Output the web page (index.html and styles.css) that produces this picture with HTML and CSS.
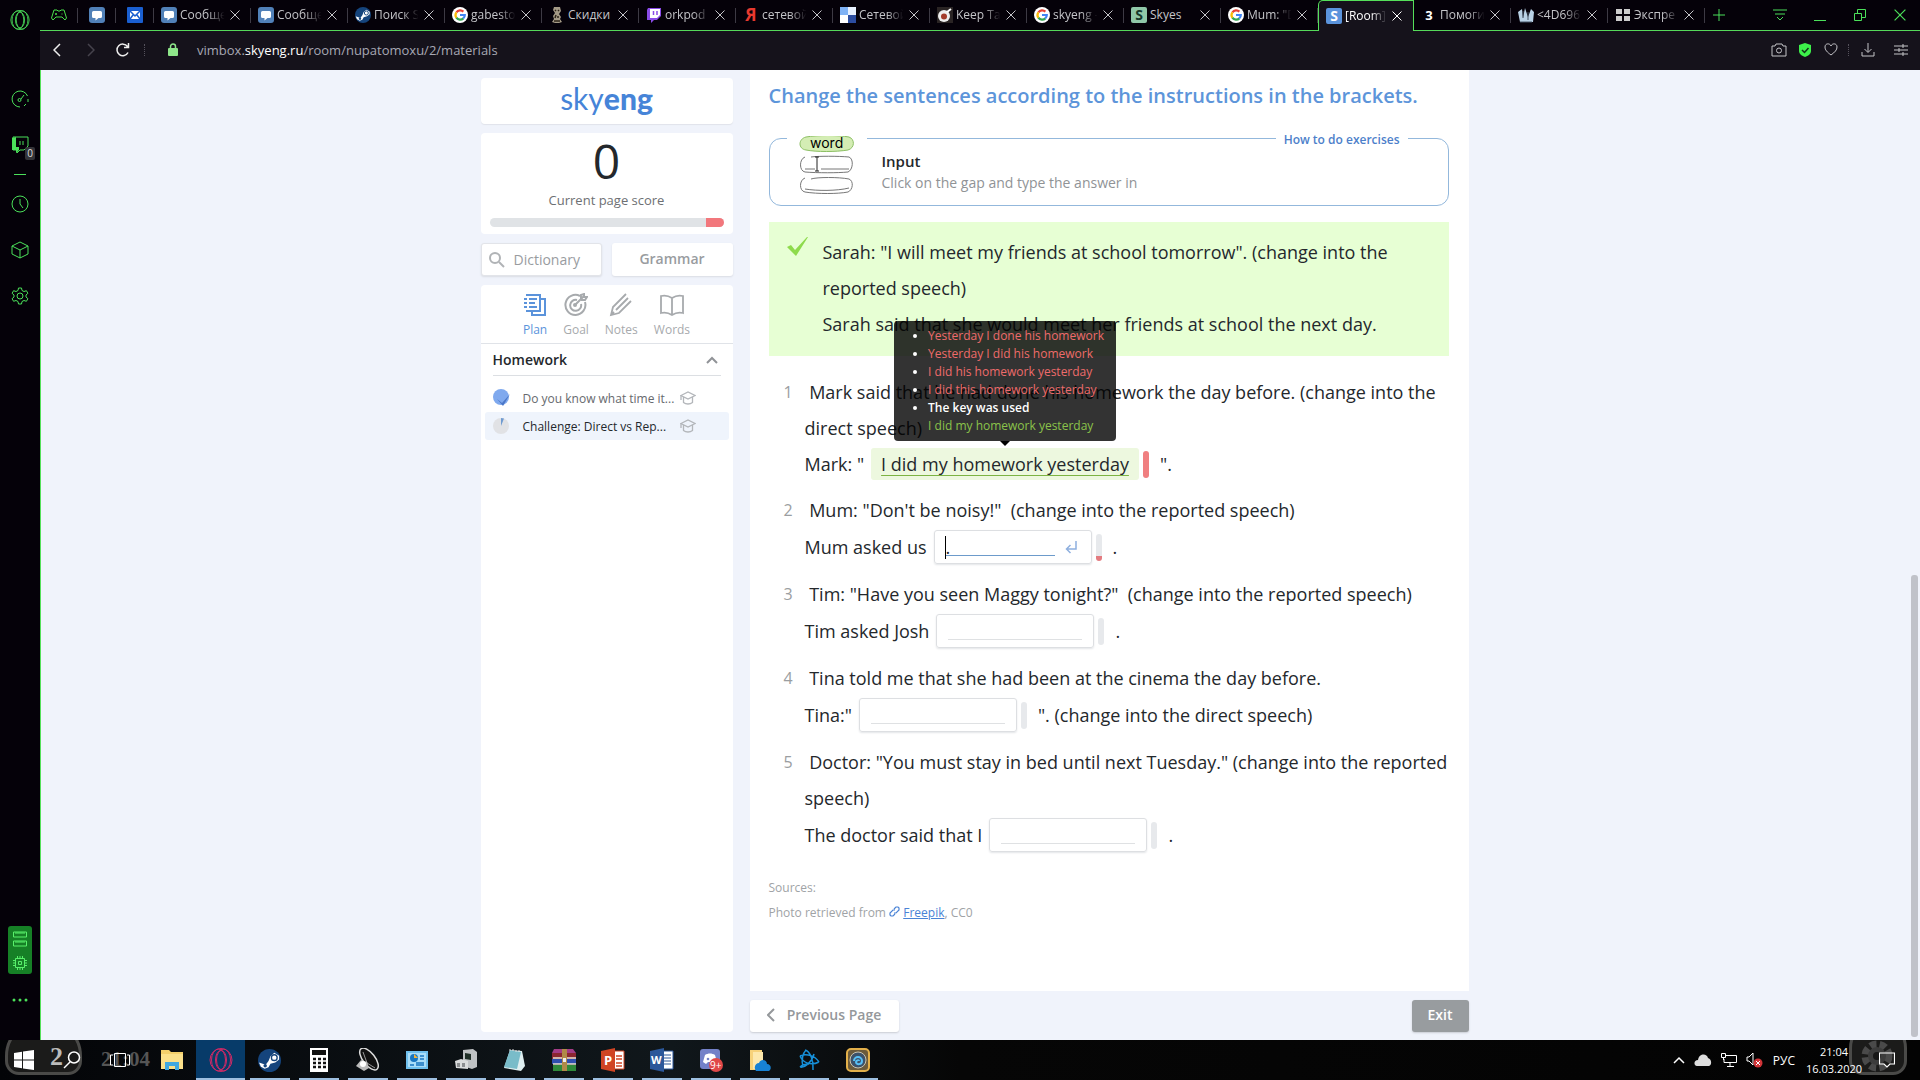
FILE: index.html
```
<!DOCTYPE html>
<html lang="en">
<head>
<meta charset="utf-8">
<title>[Room] Skyeng</title>
<link rel="stylesheet" href="styles.css">
</head>
<body>
<svg class="defs" aria-hidden="true">
  <symbol id="x" viewBox="0 0 10 10"><path d="M0.5 0.5l9 9M9.5 0.5l-9 9" stroke="currentColor" fill="none"/></symbol>
  <symbol id="google" viewBox="0 0 16 16"><circle cx="8" cy="8" r="8" fill="#fff"/><g fill="none" stroke-width="2.2"><path d="M4.4 5.3A4.7 4.7 0 0 1 11.4 4.6" stroke="#ea4335"/><path d="M4.4 10.8A4.8 4.8 0 0 1 4.4 5.3" stroke="#fbbc05"/><path d="M11.4 11.4A4.8 4.8 0 0 1 4.4 10.8" stroke="#34a853"/><path d="M8 8h4.8A4.8 4.8 0 0 1 11.2 11.5" stroke="#4285f4"/></g></symbol>
  <symbol id="vk" viewBox="0 0 16 16"><rect width="16" height="16" rx="3" fill="#5181b8"/><path d="M4.500 4h7A1.500 1.500 0 0 1 13 5.500v4A1.500 1.500 0 0 1 11.500 11H9.500l-3 2.500V11h-2A1.500 1.500 0 0 1 3 9.500v-4A1.500 1.500 0 0 1 4.500 4z" fill="#fff"/></symbol>
  <symbol id="steam" viewBox="0 0 24 24"><circle cx="12" cy="12" r="12" fill="#15447c"/><path d="M1 14l7 2.500 3-4 2-5L17 4l5 3v4l-4 3-5 1.500L11 19l-4 1.500-4-2z" fill="#fff"/><circle cx="17" cy="9" r="3" fill="#fff" stroke="#15447c" stroke-width="1.400"/><circle cx="7.500" cy="17.500" r="1.800" fill="#15447c"/></symbol>
  <symbol id="opera" viewBox="0 0 24 24"><g fill="none" stroke="currentColor"><ellipse cx="12" cy="12" rx="11" ry="11.500"/><ellipse cx="12" cy="12" rx="5.500" ry="9.500"/><ellipse cx="9.500" cy="12" rx="7" ry="11"/><ellipse cx="14.500" cy="12" rx="7" ry="11"/></g></symbol>
  <symbol id="cap" viewBox="0 0 16 14"><g fill="none" stroke="#b3b6ba" stroke-width="1.300"><path d="M1 4.500L8 1l7 3.500L8 8z"/><path d="M3.500 6v5.500C6 13.500 10 13.500 12.500 11.500V6M1 4.500V9"/></g></symbol>
  <symbol id="enter" viewBox="0 0 12 14"><path d="M11 1v8H2M5.500 5L1.500 9l4 4" fill="none" stroke="#8fb0df" stroke-width="1.500"/></symbol>
</svg>

<div class="browser">
  <aside class="opera-bar">
    <button class="ico" aria-label="Opera"><svg width="20" height="22"><use href="#opera"/></svg></button>
    <nav class="opera-nav">
      <a href="#" class="ico" aria-label="GX Control"><svg width="18" height="18" viewBox="0 0 18 18"><path d="M9 17A8 8 0 1 1 16.500 6M17 9v3M13 16l2-2" fill="none" stroke="currentColor"/><path d="M7 10a1.500 1.500 0 1 0 3 0 1.500 1.500 0 1 0-3 0M10 9l3-4" fill="none" stroke="currentColor"/></svg></a>
      <a href="#" class="ico twitch" aria-label="Twitch"><svg width="18" height="18" viewBox="0 0 18 18"><path d="M2 1h15v9l-4 4H9l-3 3v-3H2z" fill="none" stroke="currentColor"/><path d="M1 2l4-1v10h3v3l-3 3v-3H1z" fill="currentColor"/><path d="M9 5v4M12 5v4" stroke="currentColor"/></svg><span class="badge">0</span></a>
      <span class="dash"></span>
      <a href="#" class="ico" aria-label="History"><svg width="18" height="18" viewBox="0 0 18 18"><circle cx="9" cy="9" r="8" fill="none" stroke="currentColor"/><path d="M9 4v5l3 4" fill="none" stroke="currentColor"/></svg></a>
      <a href="#" class="ico" aria-label="Extensions"><svg width="18" height="18" viewBox="0 0 18 18"><path d="M9 1l8 4v8l-8 4-8-4V5zM1 5l8 4 8-4M9 9v8" fill="none" stroke="currentColor"/></svg></a>
      <a href="#" class="ico" aria-label="Settings"><svg width="18" height="18" viewBox="0 0 18 18"><path d="M7.500 1h3l.5 2.500 2 1 2.400-.8 1.500 2.600L15 8v2l1.900 1.700-1.500 2.600-2.400-.8-2 1-.5 2.500h-3L7 14.500l-2-1-2.400.8-1.500-2.600L3 10V8L1.100 6.300l1.500-2.600 2.400.8 2-1z" fill="none" stroke="currentColor"/><circle cx="9" cy="9" r="3" fill="none" stroke="currentColor"/></svg></a>
    </nav>
    <div class="gx">
      <svg width="14" height="18" viewBox="0 0 14 18"><path d="M.5 2h13v5H.5zM.5 11h13v5H.5zM3 2v2M5 2v2M7 2v2M9 2v2M11 2v2M3 11v2M5 11v2M7 11v2M9 11v2M11 11v2" fill="none" stroke="currentColor"/></svg>
      <svg width="16" height="16" viewBox="0 0 16 16"><path d="M3.500 3.500h9v9h-9zM6.500 6.500h3v3h-3zM5.500 1v2M8 1v2M10.500 1v2M5.500 13v2M8 13v2M10.500 13v2M1 5.500h2M1 8h2M1 10.500h2M13 5.500h2M13 8h2M13 10.500h2" fill="none" stroke="currentColor"/></svg>
    </div>
    <button class="ico more" aria-label="More"><svg width="16" height="4" viewBox="0 0 16 4"><circle cx="2" cy="2" r="1.500"/><circle cx="8" cy="2" r="1.500"/><circle cx="14" cy="2" r="1.500"/></svg></button>
  </aside>

  <div class="window">
    <header class="tabs">
      <div class="tab pin"><svg width="16" height="12" viewBox="0 0 16 12"><path d="M3 1h3l1 1h2l1-1h3l2.500 8-1.500 2-3-3H5l-3 3L.5 9zM5 4v2M4 5h2M10.500 5h1" fill="none" stroke="#4be04b"/></svg></div>
      <div class="tab pin"><svg width="16" height="16"><use href="#vk"/></svg></div>
      <div class="tab pin"><svg width="16" height="16" viewBox="0 0 16 16"><rect width="16" height="16" rx="1" fill="#1a5fd0"/><path d="M3 4h10v8H3z" fill="#fff"/><path d="M3 4l5 5 5-5M3 12l3-4M13 12l-3-4" fill="none" stroke="#1a5fd0" stroke-width="1.500"/></svg></div>
      <div class="tab"><svg width="16" height="16"><use href="#vk"/></svg><span>Сообще</span><button aria-label="Close"><svg width="10" height="10"><use href="#x"/></svg></button></div>
      <div class="tab"><svg width="16" height="16"><use href="#vk"/></svg><span>Сообще</span><button aria-label="Close"><svg width="10" height="10"><use href="#x"/></svg></button></div>
      <div class="tab"><svg width="16" height="16"><use href="#steam"/></svg><span>Поиск S</span><button aria-label="Close"><svg width="10" height="10"><use href="#x"/></svg></button></div>
      <div class="tab"><svg width="16" height="16"><use href="#google"/></svg><span>gabesto</span><button aria-label="Close"><svg width="10" height="10"><use href="#x"/></svg></button></div>
      <div class="tab"><svg width="16" height="16" viewBox="0 0 16 16"><path d="M5 0h6l1 4-2 3 2 3-1 2 2 3-3 1H6l-3-1 2-3-1-3 2-3-2-3z" fill="#a49a86"/><path d="M6 3l1 1M10 3l-1 1M7 8l-1 3M10 10H8M5 14h6" stroke="#2c2418" stroke-width="1.500"/></svg><span class="full">Скидки</span><button aria-label="Close"><svg width="10" height="10"><use href="#x"/></svg></button></div>
      <div class="tab"><svg width="16" height="16" viewBox="0 0 16 16"><path d="M2 1h13v8l-4 4H8l-3 3v-3H1V3z" fill="#8a4be8"/><path d="M4 2h10v6l-3 3H4z" fill="#fff"/><path d="M7.500 4v4M11 4v4" stroke="#8a4be8" stroke-width="1.500"/></svg><span>orkpod</span><button aria-label="Close"><svg width="10" height="10"><use href="#x"/></svg></button></div>
      <div class="tab"><b class="fav ya">Я</b><span>сетевой</span><button aria-label="Close"><svg width="10" height="10"><use href="#x"/></svg></button></div>
      <div class="tab"><svg width="16" height="16" viewBox="0 0 16 16"><path d="M0 0h8v8H0z" fill="#7fb2f5"/><path d="M8 0h8v8H8z" fill="#e8f1ff"/><path d="M0 8h8v8H0z" fill="#fff"/><path d="M8 8h8v8H8z" fill="#2c4da0"/></svg><span>Сетевой</span><button aria-label="Close"><svg width="10" height="10"><use href="#x"/></svg></button></div>
      <div class="tab"><svg width="16" height="16" viewBox="0 0 16 16"><path d="M0 0h16v16H0z" fill="#2a2424"/><circle cx="7" cy="9" r="6" fill="#eee"/><circle cx="7" cy="9.500" r="3" fill="#a33b2b"/><path d="M10 5l4-3" stroke="#fff" stroke-width="2"/></svg><span>Keep Tal</span><button aria-label="Close"><svg width="10" height="10"><use href="#x"/></svg></button></div>
      <div class="tab"><svg width="16" height="16"><use href="#google"/></svg><span>skyeng -</span><button aria-label="Close"><svg width="10" height="10"><use href="#x"/></svg></button></div>
      <div class="tab"><b class="fav sk">S</b><span class="full">Skyes</span><button aria-label="Close"><svg width="10" height="10"><use href="#x"/></svg></button></div>
      <div class="tab"><svg width="16" height="16"><use href="#google"/></svg><span>Mum: "D</span><button aria-label="Close"><svg width="10" height="10"><use href="#x"/></svg></button></div>
      <div class="tab active"><b class="fav room">S</b><span>[Room]</span><button aria-label="Close"><svg width="10" height="10"><use href="#x"/></svg></button></div>
      <div class="tab"><b class="fav three">3</b><span>Помоги</span><button aria-label="Close"><svg width="10" height="10"><use href="#x"/></svg></button></div>
      <div class="tab"><svg width="16" height="16" viewBox="0 0 16 16"><path d="M0 5l4-3 1 9 2-10 3 9 3-8 3 3-1 10H2z" fill="#b9d2e6"/><path d="M5 11V4M10 13V5M2 15h12" stroke="#456"/></svg><span>&lt;4D696</span><button aria-label="Close"><svg width="10" height="10"><use href="#x"/></svg></button></div>
      <div class="tab"><svg width="16" height="16" viewBox="0 0 16 16" fill="#ccc"><rect x="1" y="2" width="6" height="5"/><rect x="9" y="2" width="6" height="5"/><rect x="1" y="9" width="6" height="5"/><rect x="9" y="9" width="6" height="5"/></svg><span>Экспре</span><button aria-label="Close"><svg width="10" height="10"><use href="#x"/></svg></button></div>
      <button class="newtab" aria-label="New tab"><svg width="12" height="12" viewBox="0 0 12 12"><path d="M6 0v12M0 6h12" stroke="currentColor"/></svg></button>
      <div class="winctl">
        <button aria-label="Tab menu"><svg width="14" height="14" viewBox="0 0 14 14"><path d="M0 2h14M2 6h10M4 9l3 3 3-3" fill="none" stroke="currentColor"/></svg></button>
        <button aria-label="Minimize"><svg width="14" height="14" viewBox="0 0 14 14"><path d="M1 12.500h12" stroke="currentColor"/></svg></button>
        <button aria-label="Restore"><svg width="14" height="14" viewBox="0 0 14 14"><path d="M1.500 5.500h7v7h-7zM4.500 5V1.500h8v8H9" fill="none" stroke="currentColor"/></svg></button>
        <button aria-label="Close window"><svg width="12" height="12"><use href="#x"/></svg></button>
      </div>
    </header>

    <div class="address">
      <button class="w" aria-label="Back"><svg width="8" height="14" viewBox="0 0 8 14"><path d="M7 1L1 7l6 6" fill="none" stroke="currentColor" stroke-width="1.500"/></svg></button>
      <button class="dim" aria-label="Forward"><svg width="8" height="14" viewBox="0 0 8 14"><path d="M1 1l6 6-6 6" fill="none" stroke="currentColor" stroke-width="1.500"/></svg></button>
      <button class="w" aria-label="Reload"><svg width="14" height="14" viewBox="0 0 14 14"><path d="M12 9.500A5.800 5.800 0 1 1 11.500 3.500M12.500 0v4.500H8" fill="none" stroke="currentColor" stroke-width="1.500"/></svg></button>
      <i class="vdots"></i>
      <svg class="lock" width="12" height="14" viewBox="0 0 12 14"><path d="M3.500 7V3.500a2.500 2.500 0 0 1 5 0V7" fill="none" stroke="#8ee68a" stroke-width="1.500"/><rect x="1" y="5" width="10" height="8" rx="1" fill="#8ee68a"/></svg>
      <p class="url">vimbox.<em>skyeng.ru</em>/room/nupatomoxu/2/materials</p>
      <div class="addr-tools">
        <button aria-label="Snapshot"><svg width="16" height="14" viewBox="0 0 16 14"><path d="M1 3h3l1-2h6l1 2h3v10H1z" fill="none" stroke="currentColor"/><circle cx="8" cy="7.500" r="2.500" fill="none" stroke="currentColor"/></svg></button>
        <button aria-label="Protection"><svg width="12" height="14" viewBox="0 0 12 14"><path d="M6 0l6 2v6c0 3-3 5-6 6-3-1-6-3-6-6V2z" fill="#3df04a"/><path d="M3 7l2.500 2.500L9.500 5" fill="none" stroke="#12301a" stroke-width="1.500"/></svg></button>
        <button aria-label="Bookmark"><svg width="14" height="13" viewBox="0 0 14 13"><path d="M7 12C3 9 1 7 1 4c0-4 5-4 6-1 1-3 6-3 6 1 0 3-2 5-6 8z" fill="none" stroke="currentColor"/></svg></button>
        <i class="vdots"></i>
        <button aria-label="Downloads"><svg width="14" height="14" viewBox="0 0 14 14"><path d="M7 0v9M3.500 6L7 9.500 10.500 6M1 9v4h12V9" fill="none" stroke="currentColor"/></svg></button>
        <button class="tune" aria-label="Easy setup"><svg width="14" height="12" viewBox="0 0 14 12"><path d="M0 2h14M0 6h14M0 10h14M9 0v4M5 4v4M9 8v4" stroke="currentColor"/></svg></button>
      </div>
    </div>

    <div class="page">
      <div class="columns">
        <aside class="side">
          <div class="card brand"><a href="#">sky<b>eng</b></a></div>
          <div class="card score"><strong>0</strong><p>Current page score</p><div class="bar"><i></i></div></div>
          <div class="pair">
            <label class="dict"><svg width="18" height="18" viewBox="0 0 18 18"><circle cx="7" cy="7" r="5" fill="none" stroke="#b0b3b6" stroke-width="2"/><path d="M11 11l5 5" stroke="#b0b3b6" stroke-width="2"/></svg><input type="text" placeholder="Dictionary" aria-label="Dictionary"></label>
            <button class="grammar">Grammar</button>
          </div>
          <div class="card plan">
            <nav class="kinds">
              <a href="#" class="on"><svg width="22" height="24" viewBox="0 0 22 24"><g fill="none" stroke="currentColor" stroke-width="2"><path d="M3 3V2h13v16H3v-1M17 6h4v16H8v-3"/><path d="M0 6h3M5 6h8M0 10h3M5 10h6M0 14h3M5 14h8"/></g></svg>Plan</a>
              <a href="#"><svg width="24" height="24" viewBox="0 0 24 24"><g fill="none" stroke="currentColor" stroke-width="2"><path d="M16 3A10 10 0 1 0 21 9"/><path d="M13 7a5.500 5.500 0 1 0 4 4M11 12l9-9M17 6V2l3-1v3h3l-2 3h-4"/></g><circle cx="11" cy="12" r="2" fill="currentColor"/></svg>Goal</a>
              <a href="#"><svg width="24" height="24" viewBox="0 0 24 24"><path d="M17 1L4 14 2 22l8-2L22 8M19 5L7 17M2 22l3-3" fill="none" stroke="currentColor" stroke-width="1.800"/></svg>Notes</a>
              <a href="#"><svg width="24" height="24" viewBox="0 0 24 24"><path d="M1 3c4-1 8 0 11 2 3-2 7-3 11-2v17c-4-1-8 0-11 2-3-2-7-3-11-2zM12 5v17" fill="none" stroke="currentColor" stroke-width="1.800"/></svg>Words</a>
            </nav>
            <h2>Homework<svg width="12" height="8" viewBox="0 0 12 8"><path d="M1 7l5-5 5 5" fill="none" stroke="#909397" stroke-width="2"/></svg></h2>
            <a href="#" class="lesson"><svg width="18" height="18" viewBox="0 0 18 18"><circle cx="8" cy="8" r="8" fill="#7fa9ee"/><path d="M4 10l5 4 8-9-7 12z" fill="#4b77c8"/></svg><span>Do you know what time it...</span><svg width="16" height="14"><use href="#cap"/></svg></a>
            <a href="#" class="lesson cur"><svg width="18" height="18" viewBox="0 0 18 18"><circle cx="8" cy="9" r="8" fill="#e1e2e5"/><path d="M8 9V1a8 8 0 0 1 3 .6z" fill="#6f9bd1"/></svg><span>Challenge: Direct vs Rep...</span><svg width="16" height="14"><use href="#cap"/></svg></a>
          </div>
        </aside>

        <main class="main">
          <section class="sheet">
            <h1>Change the sentences according to the instructions in the brackets.</h1>
            <div class="hint">
              <svg class="pic" width="80" height="60" viewBox="0 0 80 60"><path fill="#fff" d="M0 0h80v60H0z"/><g fill="none" stroke="#777"><path d="M18 21c-6 2-6 14 0 15 12 1 33 1 43 0 5-2 6-13 1-15-10-1-32-1-38 0M18 33h10M34 33h28"/><path d="M18 42c-6 2-6 13 0 14 12 2 33 2 43 0 5-2 6-11 1-13-10-2-32-2-38 0M18 53c12 2 32 2 44-1"/><path d="M28 21h4M30 21v14M28 35h4" stroke="#222"/></g><path d="M19 1c-8 2-8 12 0 13 10 2 30 2 42 0 7-2 7-11 1-13-10-2-32-2-43 0z" fill="#d4edb4" stroke="#8cbf63"/><text x="23" y="12" font-size="14">word</text></svg>
              <div><b>Input</b><p>Click on the gap and type the answer in</p></div>
              <a href="#">How to do exercises</a>
            </div>
            <div class="sample">
              <svg width="21" height="20" viewBox="0 0 21 20"><path d="M0 10l4-2 4 5L20 0h1L9 19z" fill="#8edb4c"/></svg>
              <p>Sarah: "I will meet my friends at school tomorrow". (change into the reported speech)<br>Sarah said that she would meet her friends at school the next day.</p>
            </div>
            <ol class="tasks">
              <li><i>1</i><p>&nbsp;Mark said that he had done his homework the day before. (change into the direct speech)</p>
                <div class="line low"><span>Mark: "</span>
                  <span class="gap done"><input type="text" aria-label="Answer 1" value="I did my homework yesterday" readonly>
                    <span class="tip" role="tooltip"><span class="bad">Yesterday I done his homework</span><span class="bad">Yesterday I did his homework</span><span class="bad">I did his homework yesterday</span><span class="bad">I did this homework yesterday</span><span class="key">The key was used</span><span class="good">I did my homework yesterday</span></span>
                  </span><u class="meter red"></u><span>".</span></div></li>
              <li><i>2</i><p>&nbsp;Mum: "Don't be noisy!"&nbsp; (change into the reported speech)</p>
                <div class="line"><span>Mum asked us</span><span class="gap focus"><input type="text" aria-label="Answer 2" value="."><button aria-label="Check answer"><svg width="12" height="14"><use href="#enter"/></svg></button></span><u class="meter some"></u><span>.</span></div></li>
              <li><i>3</i><p>&nbsp;Tim: "Have you seen Maggy tonight?"&nbsp; (change into the reported speech)</p>
                <div class="line"><span>Tim asked Josh</span><span class="gap"><input type="text" aria-label="Answer 3"></span><u class="meter"></u><span>.</span></div></li>
              <li><i>4</i><p>&nbsp;Tina told me that she had been at the cinema the day before.</p>
                <div class="line"><span>Tina:"</span><span class="gap"><input type="text" aria-label="Answer 4"></span><u class="meter"></u><span>". (change into the direct speech)</span></div></li>
              <li><i>5</i><p>&nbsp;Doctor: "You must stay in bed until next Tuesday." (change into the reported speech)</p>
                <div class="line"><span>The doctor said that I</span><span class="gap"><input type="text" aria-label="Answer 5"></span><u class="meter"></u><span>.</span></div></li>
            </ol>
            <div class="sources"><p>Sources:</p><p>Photo retrieved from <svg width="11" height="11" viewBox="0 0 11 11"><path d="M5 3l2-2h2l1 1v2L7 7H5M6 8l-2 2H2L1 9V7l3-3h2" fill="none" stroke="#4a83d6" stroke-width="1.200"/></svg> <a href="#">Freepik</a>, CC0</p></div>
          </section>
          <footer class="foot">
            <button class="prev"><svg width="8" height="14" viewBox="0 0 8 14"><path d="M7 1L1 7l6 6" fill="none" stroke="currentColor" stroke-width="2"/></svg>Previous Page</button>
            <button class="exit">Exit</button>
          </footer>
        </main>
      </div>
      <div class="thumb"></div>
    </div>
  </div>
</div>

<footer class="taskbar">
  <div class="emblem left"></div><span class="ghost two">2</span><span class="ghost clock">21:04</span>
  <div class="emblem right"><svg width="34" height="34" viewBox="0 0 34 34"><circle cx="17" cy="17" r="11" fill="none" stroke="#4a4a4a" stroke-width="9" stroke-dasharray="6 3"/><circle cx="17" cy="17" r="9" fill="#3c3c3c"/><circle cx="17" cy="17" r="4" fill="#171717"/></svg></div>
  <button aria-label="Start"><svg width="20" height="20" viewBox="0 0 20 20" fill="#fff"><path d="M0 3l8-1.200V9.500H0zM9 1.600L20 0v9.500H9zM0 10.500h8v7.700L0 17zM9 10.500h11V20L9 18.400z"/></svg></button>
  <button aria-label="Search"><svg width="18" height="18" viewBox="0 0 18 18"><circle cx="11" cy="6.500" r="5.500" fill="none" stroke="#fff" stroke-width="1.500"/><path d="M7 11l-6 6" stroke="#fff" stroke-width="1.500"/></svg></button>
  <button aria-label="Task view"><svg width="20" height="16" viewBox="0 0 20 16"><path d="M4.500 1.500h11v13h-11zM3 3H.5v10H3M17 3h2.500v10H17" fill="none" stroke="#fff"/></svg></button>
  <button class="gapl" aria-label="Explorer"><svg width="22" height="20" viewBox="0 0 22 20"><path d="M0 0h8l2 2h12v17H0z" fill="#f3cf6b"/><path d="M0 4h22v15H0z" fill="#fbe08a"/><path d="M4 12h14v8h-4v-4H8v4H4z" fill="#40a8e0"/></svg></button>
  <button class="run sel" aria-label="Opera GX"><svg class="gxlogo" width="24" height="26"><use href="#opera"/></svg></button>
  <button class="run" aria-label="Steam"><svg width="23" height="23"><use href="#steam"/></svg></button>
  <button class="run" aria-label="Calculator"><svg width="18" height="24" viewBox="0 0 18 24"><path d="M0 0h18v24H0z" fill="#fff"/><path d="M2 2h14v5H2z" fill="#111"/><path d="M3 11h13M3 15h13M3 19h13" stroke="#111" stroke-width="2.500" stroke-dasharray="3 2"/></svg></button>
  <button class="run" aria-label="Sound"><svg width="24" height="24" viewBox="0 0 24 24"><ellipse cx="13" cy="11" rx="6" ry="13" transform="rotate(-38 13 11)" fill="#111" stroke="#ddd" stroke-width="1.500"/><path d="M7 4l4 11 8 5" fill="none" stroke="#999"/><path d="M0 18l5-6 6 2 2 6-5 3z" fill="#bbb"/><circle cx="7" cy="16" r="3" fill="#fff"/></svg></button>
  <button class="run" aria-label="Control panel"><svg width="22" height="20" viewBox="0 0 22 20"><path d="M0 1h22v18H0z" fill="#6fc0ee"/><path d="M2 3h18v14H2z" fill="#a9ddf8"/><circle cx="8" cy="8" r="4" fill="#1976c0"/><path d="M8 8V4l4 4z" fill="#f3b33b"/><path d="M14 6h4M14 9h4M4 15h4M10 13h8M10 15h8" stroke="#1976c0" stroke-width="1.500"/></svg></button>
  <button class="run" aria-label="Devices"><svg width="22" height="22" viewBox="0 0 22 22"><path d="M8 1l10-1 4 3v15l-5 2-9-3z" fill="#bfc2c4"/><path d="M10 4l6 1v6l-6-1z" fill="#1f2f27"/><path d="M0 12l6-2 7 2v8l-12-1z" fill="#dadcdc"/><path d="M2 14h3v4H2zM7 14h3v4H7z" fill="#8b8e90"/></svg></button>
  <button class="run" aria-label="Notepad"><svg width="22" height="24" viewBox="0 0 22 24"><path d="M6 2l12 1 3 15-4 5L0 20z" fill="#dfeef0"/><path d="M6 2l11 2-4 17-13-2z" fill="#79bcc9"/><path d="M6 1v2M9 1v2M12 2v2M15 2v2" stroke="#ddd"/></svg></button>
  <button class="run" aria-label="WinRAR"><svg width="24" height="22" viewBox="0 0 24 22"><path d="M2 0h19l3 4H0z" fill="#a33c86"/><path d="M0 4h24v6H0z" fill="#8b2630"/><path d="M0 10h24v5H0z" fill="#2f4fae"/><path d="M1 16h23v6H1z" fill="#2f8a3b"/><path d="M1 9h23M1 15h23" stroke="#ece4d2" stroke-width="1.500"/><path d="M10 0h5v22h-5z" fill="#b08a48"/><path d="M11 9h3v4h-3z" fill="#eee"/></svg></button>
  <button class="run" aria-label="PowerPoint"><svg width="24" height="24" viewBox="0 0 24 24"><path d="M12 3h11v18H12z" fill="#fff" stroke="#d04423"/><path d="M15 8h6M15 11h6M15 15h6M15 18h6" stroke="#d04423" stroke-width="1.500"/><path d="M0 3l14-3v24L0 21z" fill="#d04423"/><text x="3" y="17" class="app">P</text></svg></button>
  <button class="run" aria-label="Word"><svg width="24" height="24" viewBox="0 0 24 24"><path d="M12 3h11v18H12z" fill="#fff" stroke="#2b579a"/><path d="M14 7h7M14 10h7M14 13h7M14 16h7" stroke="#2b579a" stroke-width="1.200"/><path d="M0 3l14-3v24L0 21z" fill="#2b579a"/><text x="1" y="16" class="app sm">W</text></svg></button>
  <button class="run" aria-label="Discord"><svg width="24" height="26" viewBox="0 0 24 26"><rect x="1" y="2" width="20" height="20" rx="3" fill="#7381c8"/><path d="M6 8c3-2 7-2 10 0l2 7-3 2-2-2H9l-2 2-3-2z" fill="#fff"/><circle cx="9" cy="12" r="1.300" fill="#7381c8"/><circle cx="17" cy="18" r="7" fill="#e04848"/><text x="11" y="22" class="cnt">9+</text></svg></button>
  <button class="run" aria-label="OneDrive folder"><svg width="22" height="24" viewBox="0 0 22 24"><path d="M1 2h12v20H1z" fill="#f7d27a"/><path d="M4 4h10v17H4z" fill="#fde8ac"/><path d="M7 23c-3-4 0-8 3-8 2-5 8-3 8 1 4 0 5 5 2 7z" fill="#1782d4"/></svg></button>
  <button class="run" aria-label="Battle.net"><svg width="22" height="24" viewBox="0 0 22 24"><path d="M7 2c5 1 9 11 8 20M5 18C3 12 5 5 8 2M2 8c7-3 15 0 19 6M2 8c3 7 11 10 19 6M2 19C7 20 14 14 16 6M2 19c2-2 5-3 9-3" fill="none" stroke="#168fd8" stroke-width="1.500"/></svg></button>
  <button class="run" aria-label="Hearthstone"><svg width="24" height="24" viewBox="0 0 24 24"><rect x="1" y="1" width="22" height="22" rx="4" fill="#6b5a3b" stroke="#e3b04a" stroke-width="2"/><circle cx="12" cy="12" r="8" fill="#3c516a" stroke="#c9c3b0"/><path d="M8 13a4 4 0 1 1 8 0c0 4-6 4-6 1 0-2 3-2 3-1" fill="none" stroke="#58bff5" stroke-width="2"/></svg></button>
  <div class="tray">
    <svg width="12" height="8" viewBox="0 0 12 8"><path d="M1 7l5-5 5 5" fill="none" stroke="#fff" stroke-width="1.500"/></svg>
    <svg width="18" height="12" viewBox="0 0 18 12"><path d="M3 12c-4-1-3-6 1-6 1-7 9-7 10-2 4 1 4 7 1 8z" fill="#ddd"/></svg>
    <svg width="16" height="14" viewBox="0 0 16 14"><path d="M5 2.500h10.500v7H3V6M9 10v3M6 13.500h7M.5.500h4v4h-4zM2.500 5v2" fill="none" stroke="#fff"/></svg>
    <svg width="18" height="16" viewBox="0 0 18 16"><path d="M1 5h2l4-4v12L3 9H1z" fill="none" stroke="#fff"/><circle cx="12" cy="11" r="4.500" fill="#d13438"/><path d="M10 9l4 4M14 9l-4 4" stroke="#fff"/></svg>
    <span>РУС</span><p>21:04<br>16.03.2020</p>
    <svg width="16" height="16" viewBox="0 0 16 16"><path d="M.5 1h15v11H11l-3 3-3-3H.5z" fill="none" stroke="#fff" stroke-width="1.200"/></svg>
  </div>
</footer>
</body>
</html>
```
FILE: styles.css
```
* { box-sizing: border-box; }
body { margin: 0; min-height: 100vh; display: flex; flex-direction: column; font-family: "Open Sans", "Noto Sans", sans-serif; color: #24282c; background: #f0f3fb; }
p, h1, h2, ol { margin: 0; padding: 0; font-weight: normal; }
button, input { font: inherit; color: inherit; background: none; border: 0; padding: 0; margin: 0; outline: 0; }
button, .ico { display: flex; align-items: center; justify-content: center; flex-shrink: 0; }
a { color: inherit; text-decoration: none; }
svg { flex-shrink: 0; }
.defs { position: absolute; width: 0; height: 0; }

.browser { flex: 1; display: flex; }
.opera-bar { width: 40px; background: #050109; color: #4be05a; display: flex; flex-direction: column; align-items: center; padding: 9px 0 38px; }
.opera-nav { display: flex; flex-direction: column; align-items: center; gap: 28px; padding-top: 59px; }
.opera-nav .twitch { position: relative; }
.badge { position: absolute; left: 14px; top: 11px; width: 10px; height: 13px; background: #333338; color: #ddd; font-size: 10px; line-height: 13px; text-align: center; border-radius: 2px; }
.dash { width: 12px; height: 1px; background: #4be05a; margin: -8px 0; }
.gx { margin-top: auto; width: 24px; height: 48px; border-radius: 3px; background: #168026; color: #58f06a; display: flex; flex-direction: column; align-items: center; justify-content: space-around; }
.more { margin-top: 24px; height: 4px; fill: #4be05a; }

.window { flex: 1; min-width: 0; display: flex; flex-direction: column; background: #15121b; }
.tabs { height: 31px; background: #050109; border-bottom: 1px solid #55d95a; display: flex; align-items: center; font-size: 12px; color: #c4c4c8; }
.tab { width: 97px; height: 30px; display: flex; align-items: center; position: relative; padding: 0 11px 0 7px; flex-shrink: 0; }
.tab::after { content: ""; position: absolute; right: 0; top: 8px; width: 1px; height: 15px; background: #3d3a44; }
.tab.pin { width: 38px; justify-content: center; padding: 0; }
.tab span { flex: 1; min-width: 0; margin: 0 3px; overflow: hidden; white-space: nowrap; line-height: 18px; -webkit-mask-image: linear-gradient(90deg, #000 60%, transparent 95%); mask-image: linear-gradient(90deg, #000 60%, transparent 95%); }
.tab .full { -webkit-mask-image: none; mask-image: none; }
.tab.active { width: 96px; height: 31px; margin-bottom: -1px; background: #15121b; border: 1px solid #55e05a; border-bottom: 0; border-radius: 5px 0 0 0; color: #fff; }
.tab.active::after { display: none; }
.fav { width: 16px; height: 16px; line-height: 16px; text-align: center; font-size: 14px; flex-shrink: 0; }
.ya { color: #e8392f; font-size: 17px; }
.sk { background: #8fc7a8; color: #17382a; border-radius: 2px; }
.room { background: #5b94dc; color: #fff; border-radius: 2px; }
.three { color: #fff; font-size: 13px; }
.newtab { width: 27px; color: #4be05a; }
.winctl { margin-left: auto; display: flex; color: #4be05a; }
.winctl button { width: 40px; height: 30px; }
.address { height: 39px; display: flex; align-items: center; padding: 0 12px 2px; color: #c4c4c8; }
.address button { width: 26px; }
.address .w { color: #eee; width: 10px; margin-right: 24px; }
.address .dim { color: #46434d; width: 10px; margin-right: 22px; }
.address .w + .vdots { margin-left: -8px; }
.vdots { width: 2px; height: 12px; border-left: 1px dotted #55525c; flex-shrink: 0; }
.lock { margin: 0 18px 0 21px; }
.url { font-size: 13px; line-height: 20px; color: #a7a8b4; white-space: nowrap; }
.url em { font-style: normal; color: #fff; }
.addr-tools { margin-left: auto; display: flex; align-items: center; }
.addr-tools .vdots { margin: 0 5px 0 4px; }
.address .tune { margin-left: 6px; width: 28px; margin-right: -7px; }

.page { flex: 1; background: #f0f3fb; border-left: 1px solid #55e05a; position: relative; display: flex; justify-content: center; }
.thumb { position: absolute; right: 2px; top: 505px; bottom: 3px; width: 7px; border-radius: 3px; background: #c0c2c9; }
.columns { display: flex; gap: 17px; width: 988px; margin-right: 12px; }
.side { width: 252px; padding: 8px 0; display: flex; flex-direction: column; gap: 9px; }
.card { background: #fff; border-radius: 4px; }
.brand { height: 46px; text-align: center; font: 30px/40px Lato, sans-serif; color: #4684d8; box-shadow: 0 1px 1px #e0e3ea; }
.brand b { font-weight: 900; }
.score { height: 101px; padding: 4px 9px 0; text-align: center; }
.score strong { display: block; font-size: 48px; line-height: 48px; font-weight: normal; }
.score p { font-size: 13px; line-height: 20px; color: #6d7073; margin-top: 5px; }
.bar { height: 9px; margin-top: 8px; background: #e0e3e6; border-radius: 5px; overflow: hidden; display: flex; justify-content: flex-end; }
.bar i { width: 18px; background: #f2777c; }
.pair { display: flex; justify-content: space-between; height: 33px; }
.dict, .grammar { width: 121px; background: #fff; border-radius: 3px; font-size: 14px; color: #999c9f; box-shadow: 0 1px 2px #d9dce3; }
.dict { display: flex; align-items: center; border: 1px solid #e2e4e9; padding-left: 6px; }
.dict input { width: 80px; margin-left: 8px; }
.dict input::placeholder { color: #999c9f; opacity: 1; }
.grammar { font-weight: 600; padding-bottom: 3px; }
.plan { flex: 1; }
.kinds { height: 59px; border-bottom: 1px solid #e0e3e8; display: flex; justify-content: center; gap: 16px; padding-top: 8px; }
.kinds a { display: flex; flex-direction: column; align-items: center; gap: 4px; font-size: 12px; line-height: 18px; color: #a7aaad; }
.kinds .on { color: #5b93db; }
.plan h2 { display: flex; justify-content: space-between; align-items: center; height: 32px; margin: 0 12px; padding-right: 3px; border-bottom: 1px solid #dcdfe3; font-size: 14px; font-weight: 600; }
.lesson { display: flex; align-items: center; height: 28px; margin: 0 4px; padding: 0 8px; font-size: 12px; color: #66696d; border-radius: 3px; }
h2 + .lesson { margin-top: 8px; }
.lesson span { width: 157px; margin-left: 12px; white-space: nowrap; }
.lesson.cur { background: #eff4fc; color: #24282c; }

.main { flex: 1; min-width: 0; display: flex; flex-direction: column; }
.sheet { background: #fff; flex: 1; padding: 11px 20px 0 19px; }
h1 { font-size: 20px; line-height: 30px; font-weight: 600; color: #5d95da; white-space: nowrap; }
.hint { height: 68px; margin-top: 27px; border: 1px solid #93b8dc; border-radius: 12px; position: relative; padding: 11px 0 0 112px; }
.pic { position: absolute; left: 17px; top: -3px; font-family: Inter, sans-serif; }
.hint b { font-size: 15px; line-height: 22px; font-weight: 600; display: block; }
.hint p { font-size: 14px; line-height: 22px; color: #909396; }
.hint a { position: absolute; right: 40px; top: -8px; padding: 0 8px; background: #fff; font-size: 12px; line-height: 18px; color: #4d7fca; font-weight: 600; }
.sample { display: flex; margin-top: 16px; padding: 12px 48px 14px 18px; background: #e7ffd4; font-size: 18px; line-height: 36px; }
.sample svg { margin: 3px 15px 0 0; }
.tasks { list-style: none; margin-top: 18px; padding: 0 0 0 36px; font-size: 18px; line-height: 36px; }
.tasks li { position: relative; margin-bottom: 10px; }
.tasks i { position: absolute; left: -21px; top: 0; font-style: normal; color: #9b9ea1; font-size: 16px; }
.tasks p { margin-right: -4px; }
.line { display: flex; align-items: center; height: 38px; white-space: nowrap; }
.low { height: 36px; }
.gap { position: relative; display: flex; align-items: center; width: 158px; height: 34px; margin: 0 4px 0 7px; padding: 0 11px; border: 1px solid #dddfe2; border-radius: 3px; box-shadow: 0 1px 2px #e3e5e8; }
.gap input { width: 100%; height: 18px; border-bottom: 1px solid #dfe1e3; line-height: 16px; }
.done { width: 268px; height: 32px; border: 0; box-shadow: none; background: #edf8df; padding: 0 8px 0 10px; }
.done input { height: 32px; line-height: 32px; border: 0; text-decoration: underline #7cb342; text-underline-offset: 4px; }
.focus input { width: 109px; border-color: #6d9bcb; }
.focus button { margin-left: 10px; }
.focus::before { content: ""; position: absolute; left: 10px; top: 5px; width: 1px; height: 23px; background: #000; }
.meter { width: 6px; height: 27px; border-radius: 3px; background: #e7e9ec; margin-right: 11px; }
.meter.red { background: #f07f80; }
.meter.some { background: linear-gradient(#e7e9ec 22px, #e37b80 22px); }
.tip { position: absolute; left: 23px; bottom: 39px; width: 222px; height: 120px; padding: 6px 0 0 34px; background: rgba(0, 0, 0, .8); border-radius: 4px; font-size: 12px; line-height: 18px; color: #ee6b6b; }
.tip::after { content: ""; position: absolute; left: 106px; top: 120px; border: 5px solid transparent; border-top-color: #000; border-bottom: 0; }
.tip span { display: block; }
.tip .bad::before, .tip .key::before { content: ""; position: absolute; left: 19px; width: 4px; height: 4px; margin-top: 7px; border-radius: 2px; background: #fff; }
.tip .key { color: #fff; font-weight: 600; }
.tip .good { color: #8bc34a; }
.sources { margin-top: 21px; font-size: 12px; line-height: 25px; color: #a0a3a6; }
.sources a { color: #4a83d6; text-decoration: underline; }
.foot { display: flex; justify-content: space-between; padding: 9px 0 8px; height: 49px; }
.foot button { height: 32px; font-size: 14px; font-weight: 600; border-radius: 3px; box-shadow: 0 1px 2px #c9ccd3; padding-bottom: 3px; }
.foot .prev { width: 149px; gap: 12px; background: #fff; color: #95989b; }
.foot .exit { width: 57px; background: #989c9f; color: #fff; }

.taskbar { height: 40px; position: relative; overflow: hidden; display: flex; align-items: center; background: linear-gradient(90deg, #030407, #10171b 35%, #060606 50%, #030303); color: #fff; }
.taskbar button { width: 48px; height: 40px; position: relative; }
.taskbar .gapl { margin-left: 3px; width: 49px; }
.taskbar .run { width: 49px; }
.taskbar .run::after { content: ""; position: absolute; left: 5px; right: 4px; bottom: 0; height: 2px; background: #9dbfe0; }
.taskbar .sel { background: #073b69; }
.taskbar .sel::after { left: 0; right: 0; }
.gxlogo { color: #d02a66; }
.app { font: bold 13px "Open Sans", sans-serif; fill: #fff; }
.app.sm { font-size: 11px; }
.cnt { font: 10px "Open Sans", sans-serif; fill: #fff; }
.emblem { position: absolute; border: 3px solid #4a4a48; background: #1b1b1a; }
.emblem.left { left: 5px; top: -20px; width: 77px; height: 55px; border-radius: 36px 36px 14px 14px; }
.emblem.right { right: 13px; top: -20px; width: 58px; height: 55px; border-radius: 28px 28px 14px 14px; padding: 16px 0 0 8px; }
.ghost { position: absolute; font: bold 26px/30px "Liberation Serif", serif; color: #777; }
.two { left: 50px; top: 2px; color: #bbb; }
.clock { left: 101px; top: 4px; font-size: 21px; color: #555; }
.tray { margin-left: auto; padding-right: 25px; display: flex; align-items: center; gap: 9px; font-size: 12px; position: relative; }
.tray p { text-align: center; font-size: 11px; line-height: 17px; width: 56px; margin: 0 8px 0 2px; }
```
